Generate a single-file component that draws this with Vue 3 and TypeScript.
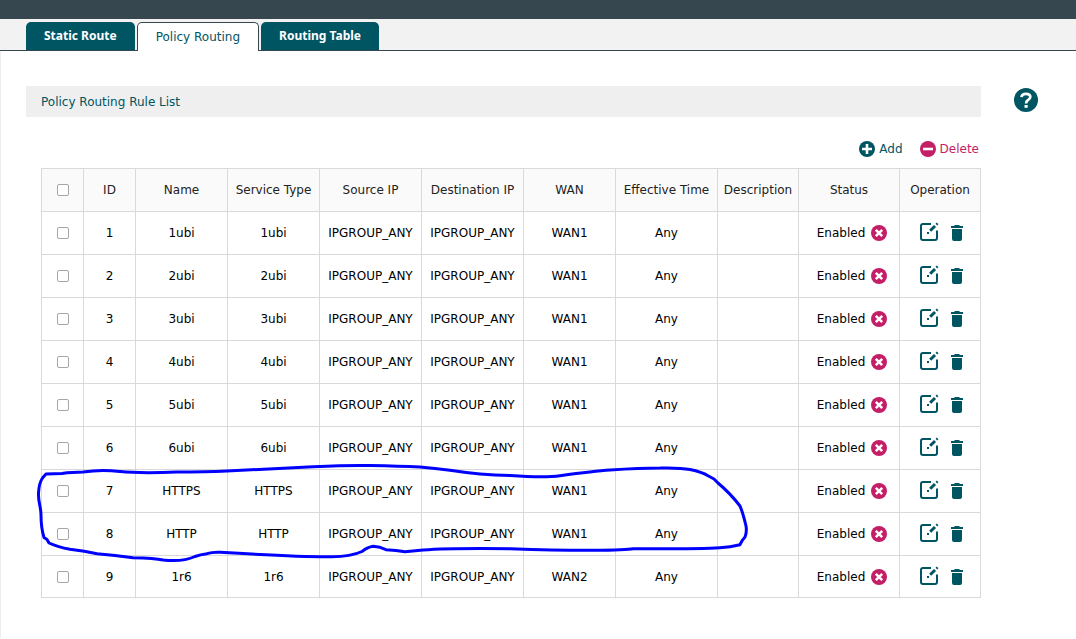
<script setup lang="ts">
import { computed, ref } from 'vue'

interface Rule {
  id: number
  name: string
  service: string
  source: string
  destination: string
  wan: string
  time: string
  description: string
}

const tabs = ['Static Route', 'Policy Routing', 'Routing Table']
const activeTab = ref('Policy Routing')

const columns = [
  { label: 'ID', key: 'id' },
  { label: 'Name', key: 'name' },
  { label: 'Service Type', key: 'service' },
  { label: 'Source IP', key: 'source' },
  { label: 'Destination IP', key: 'destination' },
  { label: 'WAN', key: 'wan' },
  { label: 'Effective Time', key: 'time' },
  { label: 'Description', key: 'description' },
] as const

const names = ['1ubi', '2ubi', '3ubi', '4ubi', '5ubi', '6ubi', 'HTTPS', 'HTTP', '1r6']
const rules = ref<Rule[]>(
  names.map((name, i) => ({
    id: i + 1,
    name,
    service: name,
    source: 'IPGROUP_ANY',
    destination: 'IPGROUP_ANY',
    wan: name === '1r6' ? 'WAN2' : 'WAN1',
    time: 'Any',
    description: '',
  })),
)

const selected = ref<number[]>([])
const allSelected = computed({
  get: () => rules.value.length > 0 && selected.value.length === rules.value.length,
  set: (on: boolean) => {
    selected.value = on ? rules.value.map((r) => r.id) : []
  },
})
</script>

<template>
  <div class="page">
    <div class="topbar"></div>
    <nav class="tabs">
      <button
        v-for="tab in tabs"
        :key="tab"
        type="button"
        class="tab"
        :class="{ active: tab === activeTab }"
        @click="activeTab = tab"
      >{{ tab }}</button>
    </nav>

    <main class="content">
      <section class="panel">
        <h2 class="title">Policy Routing Rule List</h2>
        <div class="body">
          <div class="toolbar">
            <button type="button" class="action add">
              <svg width="16" height="16" viewBox="0 0 16 16" aria-hidden="true">
                <circle cx="8" cy="8" r="8" fill="#005563" />
                <path d="M8 3v10M3 8h10" stroke="#fff" stroke-width="2.6" />
              </svg>
              Add
            </button>
            <button type="button" class="action delete">
              <svg width="16" height="16" viewBox="0 0 16 16" aria-hidden="true">
                <circle cx="8" cy="8" r="8" fill="#c41e67" />
                <path d="M3 8h10" stroke="#fff" stroke-width="2.6" />
              </svg>
              Delete
            </button>
          </div>

          <div class="table-wrap">
            <table>
              <colgroup>
                <col class="w-check" />
                <col class="w-id" />
                <col class="w-mid" />
                <col class="w-mid" />
                <col class="w-wide" />
                <col class="w-wide" />
                <col class="w-mid" />
                <col class="w-wide" />
                <col class="w-desc" />
                <col class="w-status" />
                <col class="w-desc" />
              </colgroup>
              <thead>
                <tr>
                  <th><input v-model="allSelected" type="checkbox" aria-label="Select all rules" /></th>
                  <th v-for="c in columns" :key="c.key">{{ c.label }}</th>
                  <th>Status</th>
                  <th>Operation</th>
                </tr>
              </thead>
              <tbody>
                <tr v-for="rule in rules" :key="rule.id">
                  <td>
                    <input v-model="selected" type="checkbox" :value="rule.id" :aria-label="`Select rule ${rule.id}`" />
                  </td>
                  <td v-for="c in columns" :key="c.key">{{ rule[c.key] }}</td>
                  <td>
                    <div class="status">
                      Enabled
                      <button type="button" class="icon" aria-label="Disable">
                        <svg width="16" height="16" viewBox="0 0 16 16">
                          <circle cx="8" cy="8" r="8" fill="#c41e67" />
                          <path d="M4.800 4.800l6.400 6.400M11.200 4.800l-6.400 6.400" stroke="#fff" stroke-width="2.500" />
                        </svg>
                      </button>
                    </div>
                  </td>
                  <td>
                    <div class="ops">
                      <button type="button" class="icon" aria-label="Edit">
                        <svg width="20" height="22" viewBox="0 0 20 22">
                          <path d="M12 2H4Q2 2 2 4V16Q2 18 4 18H16Q18 18 18 16V8.500" fill="none" stroke="#005563" stroke-width="2" />
                          <path d="M11.200 8.800L16 4" stroke="#005563" stroke-width="3" />
                          <path d="M17.200 1.200L18.800 2.800" stroke="#005563" stroke-width="1.800" />
                          <path d="M8 10h2v2H8z" fill="#005563" />
                        </svg>
                      </button>
                      <button type="button" class="icon" aria-label="Delete">
                        <svg width="12" height="16" viewBox="0 0 12 16">
                          <path d="M3.500 0h5v1H12v2H0V1h3.500zM1 4h10v10q0 2-2 2H3q-2 0-2-2z" fill="#005563" />
                        </svg>
                      </button>
                    </div>
                  </td>
                </tr>
              </tbody>
            </table>
            <svg class="marker" viewBox="41 168 940 430" preserveAspectRatio="none" aria-hidden="true">
              <path
                d="M46 474 L62 473.500 L67 472.700 L83 472 L93 471 Q105 470 120 471.500 Q140 473.500 177 472 Q205 472 227 471 Q270 469 313 466.700 Q350 465 370 465.500 Q400 466 420 467 Q435 468.500 450 470.300 Q480 475 510 475.500 Q545 478 560 475.700 C580 473 595 471 610 470 Q640 468 660 468 Q680 467.500 690 469.500 Q702 472 708 475.700 L714 479 L718 483 Q730 493 740 506 Q743 513 746 526 Q747 532 745 537 Q742 540 740 544.700 Q730 547 720 547.700 Q700 549 633 548.700 Q627 550 593 550.300 Q560 550.500 510 548.700 Q450 548 423 550 L405 551.700 L396 550.500 L386 549.700 L380 547.300 L373 546.300 Q368 547 362 551.500 Q350 557 330 556.700 Q300 557 220 552.300 Q212 552 207 553.700 Q200 554.500 195 556.500 Q183 562 163 560 Q155 558 133 557.700 Q115 555 97 553.700 Q85 551 70 549.300 Q58 547 49 543 L47 539.500 L44 537.500 Q41 528 41 515 C41 507 38 502 38.500 493 Q39 483 42.500 478 Z"
              />
            </svg>
          </div>
        </div>
      </section>
      <button type="button" class="icon help" aria-label="Help">
        <svg width="24" height="24" viewBox="0 0 24 24">
          <circle cx="12" cy="12" r="12" fill="#005563" />
          <path d="M7.500 9.200Q7.700 5.800 12 5.800Q16.300 5.800 16.300 9.100Q16.300 11 13.800 12.300Q12.100 13.200 12.100 15.500" fill="none" stroke="#fff" stroke-width="2.700" />
          <path d="M10.500 17h3.200v2.800h-3.200z" fill="#fff" />
        </svg>
      </button>
    </main>
  </div>
</template>

<style>
body {
  margin: 0;
  background: #fff;
}
</style>

<style scoped>
.page {
  min-height: 100vh;
  color: #000;
  font: 12px/18px Verdana, "DejaVu Sans", sans-serif;
}
button {
  font: inherit;
  cursor: pointer;
}
.topbar {
  height: 19px;
  background: #37474f;
}
.tabs {
  display: flex;
  gap: 2px;
  padding: 3px 26px 0;
  background: #f2f2f2;
  box-shadow: inset 0 -1px #37474f;
}
.tab {
  height: 29px;
  padding: 0 18px 1px;
  border: 0;
  border-bottom: 1px solid #37474f;
  border-radius: 5px 5px 0 0;
  background: #005563;
  color: #fff;
  font-family: "Noto Sans", sans-serif;
  font-weight: 700;
}
.tab.active {
  padding-bottom: 0;
  border: 1px solid #37474f;
  border-bottom: 0;
  background: #fff;
  color: #005563;
  font-family: Verdana, "DejaVu Sans", sans-serif;
  font-weight: 400;
}
.content {
  display: flex;
  align-items: flex-start;
  gap: 33px;
  padding: 35px 38px 40px 25px;
  border-left: 1px solid #eee;
}
.panel {
  flex: 1;
  min-width: 0;
}
.title {
  margin: 0;
  padding: 7px 15px 6px;
  background: #efefef;
  color: #005563;
  font-size: 12px;
  font-weight: 400;
}
.body {
  padding-left: 15px;
}
.toolbar {
  display: flex;
  justify-content: flex-end;
  gap: 17px;
  padding: 23px 2px 10px;
}
.action {
  display: flex;
  align-items: center;
  gap: 4px;
  padding: 0;
  border: 0;
  background: none;
  color: #005563;
}
.action.delete {
  color: #c41e67;
}
.table-wrap {
  position: relative;
}
table {
  width: 100%;
  table-layout: fixed;
  border-collapse: collapse;
}
.w-check { width: 42px; }
.w-id { width: 52px; }
.w-mid { width: 92px; }
.w-wide { width: 102px; }
.w-desc { width: 81px; }
.w-status { width: 101px; }
th,
td {
  height: 42px;
  padding: 0;
  border: 1px solid #d9d9d9;
  font-weight: 400;
  text-align: center;
  white-space: nowrap;
}
tr:last-child td {
  height: 41px;
}
th {
  background: #fafafa;
  color: #222;
}
input[type="checkbox"] {
  display: block;
  appearance: none;
  width: 12px;
  height: 12px;
  margin: 0 auto;
  border: 1px solid #a6a6a6;
  border-radius: 2px;
  background: #fff;
}
input[type="checkbox"]:checked {
  background: #005563;
}
.status,
.ops {
  display: flex;
  align-items: center;
  justify-content: center;
  gap: 6px;
}
.status {
  padding-left: 6px;
}
.ops {
  gap: 12px;
  padding-left: 2px;
}
.icon {
  display: block;
  flex: none;
  padding: 0;
  border: 0;
  background: none;
}
.icon svg,
.action svg {
  display: block;
}
.help {
  margin-top: 2px;
}
.marker {
  position: absolute;
  inset: 0;
  width: 100%;
  height: 100%;
  overflow: visible;
  pointer-events: none;
  fill: none;
  stroke: #00f;
  stroke-width: 3px;
  stroke-linejoin: round;
}
</style>
